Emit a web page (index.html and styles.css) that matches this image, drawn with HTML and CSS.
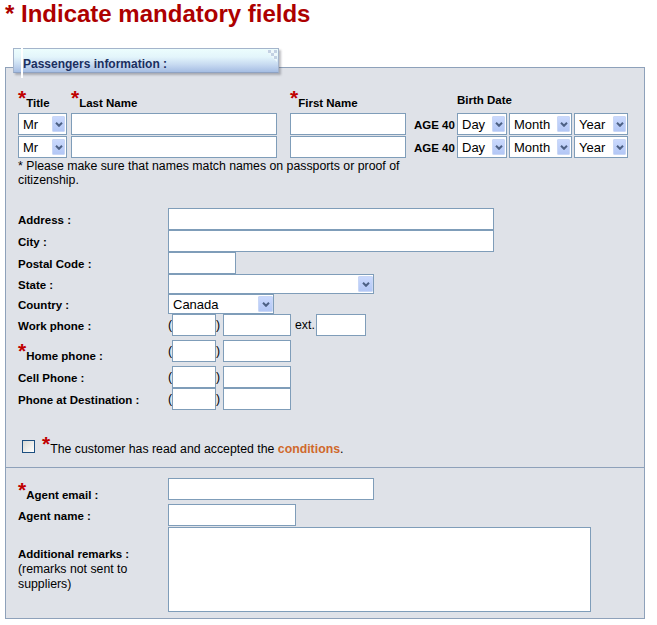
FILE: index.html
```html
<!DOCTYPE html>
<html>
<head>
<meta charset="utf-8">
<title>Passengers information</title>
<link rel="stylesheet" href="styles.css">
</head>
<body>
<div class="page">
  <h1 class="title">* Indicate mandatory fields</h1>

  <div class="tab">Passengers information :</div>

  <div class="panel">
    <div class="sec sec-main">
      <div class="pax">
        <div class="hd"><span class="req">*</span>Title</div>
        <div class="hd"><span class="req">*</span>Last Name</div>
        <div class="hd"><span class="req">*</span>First Name</div>
        <div class="hd"></div>
        <div class="hd hd-birth">Birth Date</div>

        <div class="cell"><span class="combo c-title"><select><option>Mr</option></select><span class="btn"><svg width="8" height="5" viewBox="0 0 8 5"><path d="M1 0.8 L4 3.8 L7 0.8" stroke="#4d6185" stroke-width="2" fill="none"/></svg></span></span></div>
        <div class="cell"><input class="in w-last" type="text"></div>
        <div class="cell"><input class="in w-first" type="text"></div>
        <div class="cell age">AGE 40</div>
        <div class="cell dates">
          <span class="combo c-day"><select><option>Day</option></select><span class="btn"><svg width="8" height="5" viewBox="0 0 8 5"><path d="M1 0.8 L4 3.8 L7 0.8" stroke="#4d6185" stroke-width="2" fill="none"/></svg></span></span>
          <span class="combo c-month"><select><option>Month</option></select><span class="btn"><svg width="8" height="5" viewBox="0 0 8 5"><path d="M1 0.8 L4 3.8 L7 0.8" stroke="#4d6185" stroke-width="2" fill="none"/></svg></span></span>
          <span class="combo c-year"><select><option>Year</option></select><span class="btn"><svg width="8" height="5" viewBox="0 0 8 5"><path d="M1 0.8 L4 3.8 L7 0.8" stroke="#4d6185" stroke-width="2" fill="none"/></svg></span></span>
        </div>

        <div class="cell"><span class="combo c-title"><select><option>Mr</option></select><span class="btn"><svg width="8" height="5" viewBox="0 0 8 5"><path d="M1 0.8 L4 3.8 L7 0.8" stroke="#4d6185" stroke-width="2" fill="none"/></svg></span></span></div>
        <div class="cell"><input class="in w-last" type="text"></div>
        <div class="cell"><input class="in w-first" type="text"></div>
        <div class="cell age">AGE 40</div>
        <div class="cell dates">
          <span class="combo c-day"><select><option>Day</option></select><span class="btn"><svg width="8" height="5" viewBox="0 0 8 5"><path d="M1 0.8 L4 3.8 L7 0.8" stroke="#4d6185" stroke-width="2" fill="none"/></svg></span></span>
          <span class="combo c-month"><select><option>Month</option></select><span class="btn"><svg width="8" height="5" viewBox="0 0 8 5"><path d="M1 0.8 L4 3.8 L7 0.8" stroke="#4d6185" stroke-width="2" fill="none"/></svg></span></span>
          <span class="combo c-year"><select><option>Year</option></select><span class="btn"><svg width="8" height="5" viewBox="0 0 8 5"><path d="M1 0.8 L4 3.8 L7 0.8" stroke="#4d6185" stroke-width="2" fill="none"/></svg></span></span>
        </div>
      </div>

      <p class="note">* Please make sure that names match names on passports or proof of citizenship.</p>

      <div class="addr">
        <div class="frow"><div class="lbl">Address :</div><input class="in w-addr" type="text"></div>
        <div class="frow"><div class="lbl">City :</div><input class="in w-addr" type="text"></div>
        <div class="frow"><div class="lbl">Postal Code :</div><input class="in w-postal" type="text"></div>
        <div class="frow h20"><div class="lbl">State :</div><span class="combo c-state"><select><option></option></select><span class="btn"><svg width="8" height="5" viewBox="0 0 8 5"><path d="M1 0.8 L4 3.8 L7 0.8" stroke="#4d6185" stroke-width="2" fill="none"/></svg></span></span></div>
        <div class="frow h20"><div class="lbl">Country :</div><span class="combo c-country"><select><option>Canada</option></select><span class="btn"><svg width="8" height="5" viewBox="0 0 8 5"><path d="M1 0.8 L4 3.8 L7 0.8" stroke="#4d6185" stroke-width="2" fill="none"/></svg></span></span></div>
        <div class="frow"><div class="lbl">Work phone :</div>
          <div class="phone"><span class="par">(</span><input class="in w-area" type="text"><span class="par">)</span><input class="in w-num" type="text"><span class="ext">ext.</span><input class="in w-ext" type="text"></div>
        </div>
        <div class="frow h30"><div class="lbl lbl-req"><span class="req">*</span>Home phone :</div>
          <div class="phone"><span class="par">(</span><input class="in w-area" type="text"><span class="par">)</span><input class="in w-num" type="text"></div>
        </div>
        <div class="frow"><div class="lbl">Cell Phone :</div>
          <div class="phone"><span class="par">(</span><input class="in w-area" type="text"><span class="par">)</span><input class="in w-num" type="text"></div>
        </div>
        <div class="frow"><div class="lbl">Phone at Destination :</div>
          <div class="phone"><span class="par">(</span><input class="in w-area" type="text"><span class="par">)</span><input class="in w-num" type="text"></div>
        </div>
      </div>

      <div class="accept"><span class="cb"></span><span class="req">*</span>The customer has read and accepted the <a class="cond">conditions</a>.</div>
    </div>

    <div class="sec sec-agent">
      <div class="frow"><div class="lbl lbl-req2"><span class="req">*</span>Agent email :</div><input class="in w-email" type="text"></div>
      <div class="frow gap4"><div class="lbl">Agent name :</div><input class="in w-name" type="text"></div>
      <div class="frow h85 gap1"><div class="lbl lbl-remarks"><b>Additional remarks :</b><span class="sub">(remarks not sent to suppliers)</span></div><textarea class="in ta"></textarea></div>
    </div>
  </div>
</div>
</body>
</html>
```

FILE: styles.css
```css
* { box-sizing: border-box; }
html, body { margin: 0; padding: 0; background: #ffffff; }
body { font-family: "Liberation Sans", Arial, sans-serif; color: #000; font-size: 12.3px; }

.page { width: 657px; padding: 0 0 0 5px; }

.title {
  margin: 0;
  font-size: 24px;
  line-height: 28px;
  font-weight: bold;
  color: #ad0000;
}

/* tab header */
.tab {
  position: relative;
  z-index: 1;
  margin: 20px 0 -6px 8px;
  width: 266px;
  height: 25px;
  border: 1px solid #a4b4cb;
  border-bottom-color: #8ea2c3;
  background: linear-gradient(#ecfdfd 0%, #e3f5fb 35%, #c5d8f0 70%, #a5bde3 100%);
  box-shadow: 2px 2px 2px rgba(70, 70, 80, 0.35);
  padding: 8px 0 0 9px;
  font-size: 12px;
  line-height: 14px;
  font-weight: bold;
  color: #1b2f5f;
}
.tab::before {
  content: "";
  position: absolute;
  left: 7px;
  top: -1px;
  width: 2px;
  height: 30px;
  background: #ffffff;
}
.tab::after {
  content: "";
  position: absolute;
  right: 1px;
  top: 1px;
  width: 12px;
  height: 12px;
  background: repeating-conic-gradient(#c3d1e3 0 25%, #eef8fb 0 50%) 0 0 / 6px 6px;
  clip-path: polygon(0 0, 100% 0, 100% 100%);
}

/* panel */
.panel {
  width: 640px;
  border: 1px solid #8ea1ba;
  background: #dfe2e8;
}
.sec-main { padding: 0 12px 10px 12px; }
.sec-agent { border-top: 1px solid #8ea1ba; padding: 10px 12px 6px 12px; }

.req {
  color: #c00000;
  font-size: 21px;
  font-weight: bold;
  line-height: 0;
  vertical-align: 2px;
}

/* passengers grid */
.pax {
  display: grid;
  grid-template-columns: 53px 219px 124px 43px 1fr;
  grid-template-rows: 44px 22px 22px;
  row-gap: 1px;
}
.hd {
  align-self: end;
  padding-bottom: 2px;
  font-size: 11.5px;
  line-height: 13px;
  font-weight: bold;
  white-space: nowrap;
}
.hd-birth { padding-bottom: 5px; }
.cell { display: flex; align-items: center; }
.age {
  font-size: 11.5px;
  line-height: 13px;
  font-weight: bold;
  padding-top: 2px;
  white-space: nowrap;
}
.dates { gap: 2px; }

/* controls */
.in {
  height: 22px;
  margin: 0;
  padding: 0 2px;
  border: 1px solid #7f9db9;
  border-radius: 0;
  background: #ffffff;
  font: 12px "Liberation Sans", Arial, sans-serif;
  outline: none;
}
.w-last { width: 206px; }
.w-first { width: 116px; }
.w-addr { width: 326px; }
.w-postal { width: 68px; }
.w-area { width: 44px; }
.w-num { width: 68px; }
.w-ext { width: 50px; }
.w-email { width: 206px; }
.w-name { width: 128px; }
.ta { width: 423px; height: 85px; resize: none; }

.combo {
  position: relative;
  display: inline-block;
  height: 22px;
  flex: none;
}
.combo select {
  -webkit-appearance: none;
  appearance: none;
  display: block;
  width: 100%;
  height: 100%;
  margin: 0;
  padding: 0 0 0 4px;
  border: 1px solid #7f9db9;
  border-radius: 0;
  background: #ffffff;
  color: #000;
  font: 13px "Liberation Sans", Arial, sans-serif;
  outline: none;
}
.combo .btn {
  position: absolute;
  right: 2px;
  top: 50%;
  margin-top: -8px;
  width: 13px;
  height: 16px;
  border: 1px solid #c9d7f6;
  border-radius: 1px;
  background: linear-gradient(#cad9fd, #b3c7f5);
  display: flex;
  align-items: center;
  justify-content: center;
  pointer-events: none;
}
.c-title { width: 49px; }
.c-day { width: 50px; }
.c-month { width: 63px; }
.c-year { width: 54px; }
.c-state { width: 206px; height: 20px; }
.c-country { width: 106px; height: 20px; }
.c-state .btn, .c-country .btn { width: 15px; right: 1px; }

.note {
  margin: 1px 0 0 0;
  max-width: 400px;
  line-height: 14px;
  font-size: 12.3px;
}

/* address rows */
.addr { margin-top: 21px; }
.frow {
  display: flex;
  align-items: center;
  height: 22px;
}
.frow.h20 { height: 20px; }
.frow.h30 { height: 30px; }
.frow.h85 { height: 85px; }
.frow.gap4 { margin-top: 4px; }
.frow.gap1 { margin-top: 1px; }
.lbl {
  width: 150px;
  flex: none;
  padding-top: 2px;
  font-size: 11.5px;
  line-height: 13px;
  font-weight: bold;
  white-space: nowrap;
}
.lbl-req { padding-top: 10px; }
.lbl-req2 { padding-top: 13px; }
.lbl-remarks {
  padding-top: 0;
  white-space: normal;
  line-height: 15px;
  font-weight: normal;
}
.lbl-remarks b { display: block; font-weight: bold; }
.lbl-remarks .sub { display: block; font-size: 12.3px; padding-right: 10px; }

.phone { display: flex; align-items: center; }
.par { font-size: 12.3px; width: 4px; line-height: 14px; }
.phone .w-num { margin-left: 3px; }
.ext { font-size: 12.3px; margin: 0 1px 0 4px; line-height: 14px; }

/* accept */
.accept {
  margin-top: 30px;
  line-height: 15px;
  font-size: 12.3px;
}
.cb {
  display: inline-block;
  width: 13px;
  height: 13px;
  margin: 0 7px 0 4px;
  border: 1px solid #1c4f80;
  background: linear-gradient(135deg, #dadad4, #ffffff);
  vertical-align: baseline;
}
.cond { color: #d0692c; font-weight: bold; text-decoration: none; }
```
